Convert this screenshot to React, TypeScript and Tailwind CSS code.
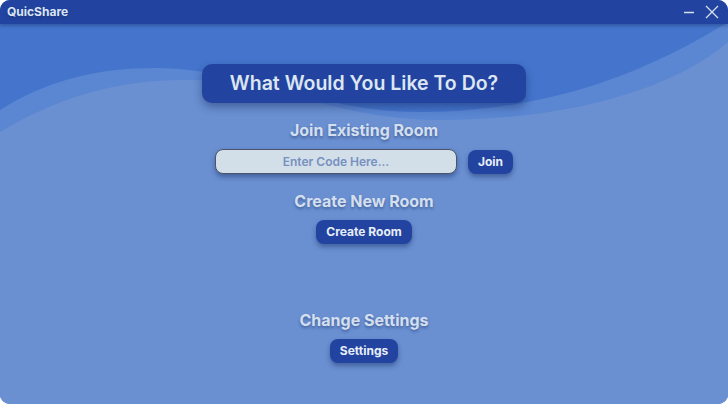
import { useState } from "react";

const shadowText = "[text-shadow:0_2px_3px_rgba(20,40,90,0.45)]";

function Wave() {
  return (
    <svg
      className="absolute inset-0 h-full w-full"
      viewBox="0 0 728 380"
      preserveAspectRatio="none"
      aria-hidden
    >
      <path
        d="M0,86 C50,54 105,43 160,44 C250,46 320,88 420,88 C560,88 660,40 728,-2 L728,380 L0,380 Z"
        fill="#5a86d2"
      />
      <path
        d="M0,108 C60,72 120,55 190,56 C280,58 340,96 440,96 C580,96 680,60 728,18 L728,380 L0,380 Z"
        fill="#6a90d2"
      />
    </svg>
  );
}

function Btn({ children }: { children: React.ReactNode }) {
  return (
    <button className="h-6 rounded-lg bg-[#2244a0] px-[10px] text-[12px] font-bold text-[#e8eef8] shadow-[0_3px_5px_rgba(20,40,90,0.45)]">
      {children}
    </button>
  );
}

export default function App() {
  const [code, setCode] = useState("");

  return (
    <div className="h-[404px] w-[728px] bg-white font-['Inter','Liberation_Sans',sans-serif]">
      <div className="flex h-full flex-col overflow-hidden rounded-[10px] bg-[#4474cc]">
        <div className="relative z-10 flex h-6 shrink-0 items-center justify-between bg-[#2244a0] pl-[7px] pr-[9px] shadow-[0_2px_3px_rgba(20,40,90,0.35)]">
          <span className={`text-[12px] font-bold text-[#dbe4f2] ${shadowText}`}>
            QuicShare
          </span>
          <div className="flex items-center gap-[10px]">
            <svg width="12" height="12" viewBox="0 0 12 12">
              <path d="M1 6.5 H11" stroke="#d6e0f0" strokeWidth="1.6" />
            </svg>
            <svg width="14" height="14" viewBox="0 0 14 14">
              <path d="M1 1 L13 13 M13 1 L1 13" stroke="#d6e0f0" strokeWidth="1.3" />
            </svg>
          </div>
        </div>

        <div className="relative flex-1">
          <Wave />
          <div className="relative flex flex-col items-center">
            <div className="mt-[40px] flex h-[39px] w-[324px] items-center justify-center rounded-[10px] bg-[#2244a0] shadow-[0_4px_8px_rgba(20,40,90,0.45)]">
              <h1 className="text-[19.5px] font-semibold text-[#dce6f2]">
                What Would You Like To Do?
              </h1>
            </div>

            <h2 className={`mt-[17px] text-[16px] leading-5 font-bold text-[#d4dfee] ${shadowText}`}>
              Join Existing Room
            </h2>
            <div className="mt-[9px] flex items-center gap-[11px]">
              <input
                value={code}
                onChange={(e) => setCode(e.target.value)}
                placeholder="Enter Code Here..."
                className="h-[25px] w-[242px] rounded-lg border-[1.5px] border-[#4a5466] bg-[#d2dfe9] text-center text-[12px] font-semibold text-[#334] placeholder:text-[#7890c0] shadow-[0_3px_5px_rgba(20,40,90,0.45)] outline-none"
              />
              <Btn>Join</Btn>
            </div>

            <h2 className={`mt-[17px] text-[16px] leading-5 font-bold text-[#d4dfee] ${shadowText}`}>
              Create New Room
            </h2>
            <div className="mt-[9px] flex">
              <Btn>Create Room</Btn>
            </div>

            <h2 className={`mt-[66px] text-[16px] leading-5 font-bold text-[#d4dfee] ${shadowText}`}>
              Change Settings
            </h2>
            <div className="mt-[9px] flex">
              <Btn>Settings</Btn>
            </div>
          </div>
        </div>
      </div>
    </div>
  );
}
